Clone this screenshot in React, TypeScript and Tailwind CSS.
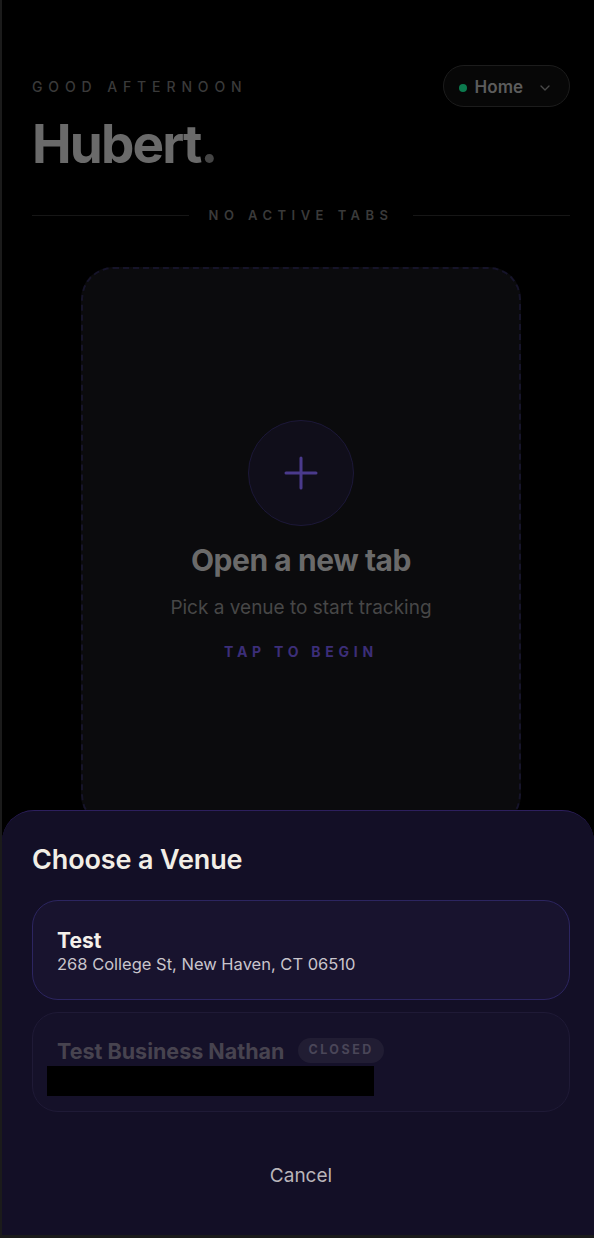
import { ChevronDown } from "lucide-react";

const venues = [
    { name: "Test", address: "268 College St, New Haven, CT 06510", closed: false },
    { name: "Test Business Nathan", address: "", closed: true },
]

export default function App() {
    return (
        <div className="relative h-[1238px] w-[594px] overflow-hidden bg-black border-l-2 border-b-[3px] border-[#1b1b1b] font-['Inter',sans-serif]">
            <div className="flex flex-col pl-[30px] pr-[24px] pt-[65px]">
                <div className="flex items-start justify-between">
                    <div className="flex flex-col">
                        <span className="mt-[15px] text-[14px] font-medium tracking-[0.42em] text-[#3a3a3a] leading-none">GOOD AFTERNOON</span>
                        <h1 className="mt-[24px] text-[53px] font-bold tracking-[-0.035em] text-[#6a6a6a] leading-none">
                            Hubert<span className="text-[#454545]">.</span>
                        </h1>
                    </div>
                    <button className="flex h-[42px] items-center gap-2 rounded-full border border-[#1c1c1c] bg-[#070707] pl-[15px] pr-[16px] pt-[3px]">
                        <span className="h-[8px] w-[8px] rounded-full bg-[#0c7a4e]" />
                        <span className="text-[17px] font-semibold text-[#5c5c5c]">Home</span>
                        <ChevronDown className="ml-[6px] h-[16px] w-[16px] text-[#4a4a4a]" strokeWidth={2} />
                    </button>
                </div>

                <div className="mt-[38px] flex items-center gap-[20px]">
                    <div className="h-px flex-1 bg-[#161616]" />
                    <span className="text-[13px] font-semibold tracking-[0.42em] text-[#3a3a3a] leading-none">NO ACTIVE TABS</span>
                    <div className="h-px flex-1 bg-[#161616]" />
                </div>

                <div className="mx-auto mt-[45px] flex h-[560px] w-[440px] flex-col items-center rounded-[32px] border-2 border-dashed border-[#16142a] bg-[#0b0b0d] pt-[151px]">
                    <div className="flex h-[106px] w-[106px] items-center justify-center rounded-full border border-[#1c1838] bg-[#100e1a]">
                        <svg width="34" height="34" viewBox="0 0 34 34" fill="none" stroke="#4a3a8c" strokeWidth="3" strokeLinecap="round">
                            <path d="M17 2v30M2 17h30" />
                        </svg>
                    </div>
                    <h2 className="mt-[12px] text-[30px] font-bold tracking-[-0.015em] text-[#6a6a6a]">Open a new tab</h2>
                    <p className="mt-[11px] text-[19px] text-[#474747]">Pick a venue to start tracking</p>
                    <span className="mt-[18px] text-[14px] font-bold tracking-[0.34em] text-[#3c2e78]">TAP TO BEGIN</span>
                </div>
            </div>

            <div className="absolute inset-x-0 bottom-0 flex h-[425px] flex-col rounded-t-[32px] border-t border-[#2d1f5e] bg-[#130f26] pl-[30px] pr-[24px] pt-[29px]">
                <h3 className="text-[27px] font-semibold tracking-[-0.005em] text-[#f2eee6]">Choose a Venue</h3>
                <div className="mt-[19px] flex flex-col gap-[12px]">
                    {venues.map((venue) => (
                        <div
                            key={venue.name}
                            className={venue.closed
                                ? "flex h-[100px] flex-col justify-center rounded-[26px] border border-[#1f1a36] bg-[#151129] px-[24px] pt-[10px]"
                                : "flex h-[100px] flex-col justify-center rounded-[26px] border border-[#2c2560] bg-[#18132e] px-[24px] pt-[4px]"}
                        >
                            <div className="flex items-center gap-[14px]">
                                <span className={venue.closed ? "text-[21.5px] font-bold text-[#47434f] leading-[26px]" : "text-[21px] font-bold text-[#f4f0ea] leading-[24px]"}>{venue.name}</span>
                                {venue.closed && (
                                    <span className="rounded-full bg-[#211d33] px-[10px] py-[6px] text-[12.5px] font-bold tracking-[0.2em] text-[#4a4658] leading-none">CLOSED</span>
                                )}
                            </div>
                            {venue.closed ? (
                                <div className="ml-[-10px] mt-[2px] h-[30px] w-[327px] bg-black" />
                            ) : (
                                <span className="text-[16.5px] text-[#c9c5cc] leading-[22px]">{venue.address}</span>
                            )}
                        </div>
                    ))}
                </div>
                <button className="mt-[50px] self-center text-[19px] text-[#b9b5b9]">Cancel</button>
            </div>
        </div>
    )
}
